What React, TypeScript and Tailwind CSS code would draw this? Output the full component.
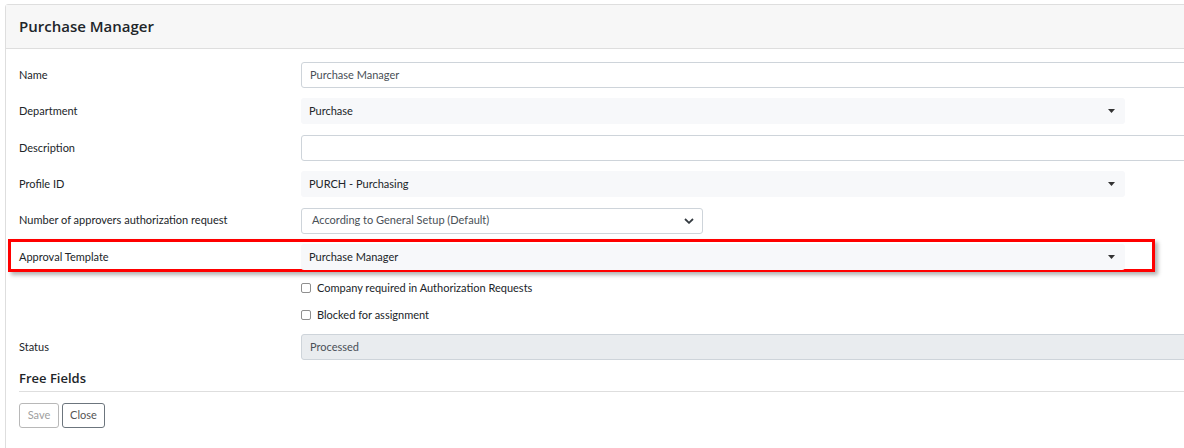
import React from "react";

const Caret = () => (
  <svg width="7" height="4" viewBox="0 0 7 4" className="absolute right-[10px] top-[11px]">
    <path d="M0 0 L7 0 L3.5 4 Z" fill="#333" />
  </svg>
);

function Label({ children }: { children: React.ReactNode }) {
  return <div className="flex items-center text-[11px] text-[#212529]">{children}</div>;
}

function TextInput({ value }: { value: string }) {
  return (
    <div className="h-[26px] w-[1000px] border border-[#ced4da] rounded-[3px] bg-white flex items-center px-[8px] text-[11px] text-[#495057]">
      {value}
    </div>
  );
}

function Select2({ value }: { value: string }) {
  return (
    <div className="relative h-[26px] w-[824px] rounded-[3px] bg-[#f7f8fa] flex items-center px-[8px] text-[11px] text-[#212529]">
      {value}
      <Caret />
    </div>
  );
}

export default function App() {
  return (
    <div className="w-full h-[448px] overflow-hidden bg-white pl-[5px] pt-[4px]" style={{ fontFamily: '"Open Sans", "Noto Sans", sans-serif' }}>
      <div className="w-[1300px] h-[500px] border border-[#dedede] rounded-tl-[3px]">
        <div className="h-[44px] bg-[#f7f7f7] border-b border-[#dedede] flex items-center px-[13px]">
          <span className="text-[15px] font-semibold text-[#212529]">Purchase Manager</span>
        </div>
        <div className="px-[13px] pt-[13px]" style={{ fontFamily: 'Lato, "Open Sans", sans-serif' }}>
          <div className="grid grid-cols-[282px_1fr] gap-y-[10.4px]">
            <Label>Name</Label>
            <TextInput value="Purchase Manager" />
            <Label>Department</Label>
            <Select2 value="Purchase" />
            <Label>Description</Label>
            <TextInput value="" />
            <Label>Profile ID</Label>
            <Select2 value="PURCH - Purchasing" />
            <Label>Number of approvers authorization request</Label>
            <div className="relative h-[26px] w-[402px] border border-[#ced4da] rounded-[3px] bg-white flex items-center px-[10px] text-[11px] text-[#495057]">
              According to General Setup (Default)
              <svg width="10" height="6" viewBox="0 0 10 6" className="absolute right-[8px] top-[9px]">
                <path d="M1 1 L5 4.8 L9 1" fill="none" stroke="#343a40" strokeWidth="1.8" />
              </svg>
            </div>
            <div className="relative col-span-2 grid grid-cols-[282px_1fr]">
              <div className="absolute left-[-11px] top-[-5px] w-[1147px] h-[33px] border-[3px] border-[#ff0000] shadow-[3px_3px_4px_rgba(0,0,0,0.3)] pointer-events-none" />
              <Label>Approval Template</Label>
              <Select2 value="Purchase Manager" />
            </div>
          </div>
          <div className="grid grid-cols-[282px_1fr] mt-[8px]">
            <div />
            <div className="flex flex-col gap-[7px]">
              <label className="h-[20px] flex items-center gap-[6px] text-[11px] text-[#212529]">
                <span className="w-[10px] h-[10px] border border-[#8f8f8f] rounded-[2px] bg-white" />
                Company required in Authorization Requests
              </label>
              <label className="h-[20px] flex items-center gap-[6px] text-[11px] text-[#212529]">
                <span className="w-[10px] h-[10px] border border-[#8f8f8f] rounded-[2px] bg-white" />
                Blocked for assignment
              </label>
            </div>
          </div>
          <div className="grid grid-cols-[282px_1fr] mt-[9px]">
            <Label>Status</Label>
            <div className="h-[26px] w-[1000px] border border-[#ced4da] rounded-[3px] bg-[#e9ecef] flex items-center px-[8px] text-[11px] text-[#495057]">
              Processed
            </div>
          </div>
          <div className="mt-[9px] pb-[4px] border-b border-[#dedede] text-[13px] font-semibold text-[#212529] leading-[18px]" style={{ fontFamily: '"Open Sans", sans-serif' }}>
            Free Fields
          </div>
          <div className="flex gap-[3px] mt-[11px]">
            <button className="h-[25px] w-[40px] border border-[#b8b8b8] rounded-[3px] text-[11px] text-[#a0a0a0] bg-white">Save</button>
            <button className="h-[25px] w-[43px] border border-[#6c757d] rounded-[3px] text-[11px] text-[#555] bg-white">Close</button>
          </div>
        </div>
      </div>
    </div>
  );
}
